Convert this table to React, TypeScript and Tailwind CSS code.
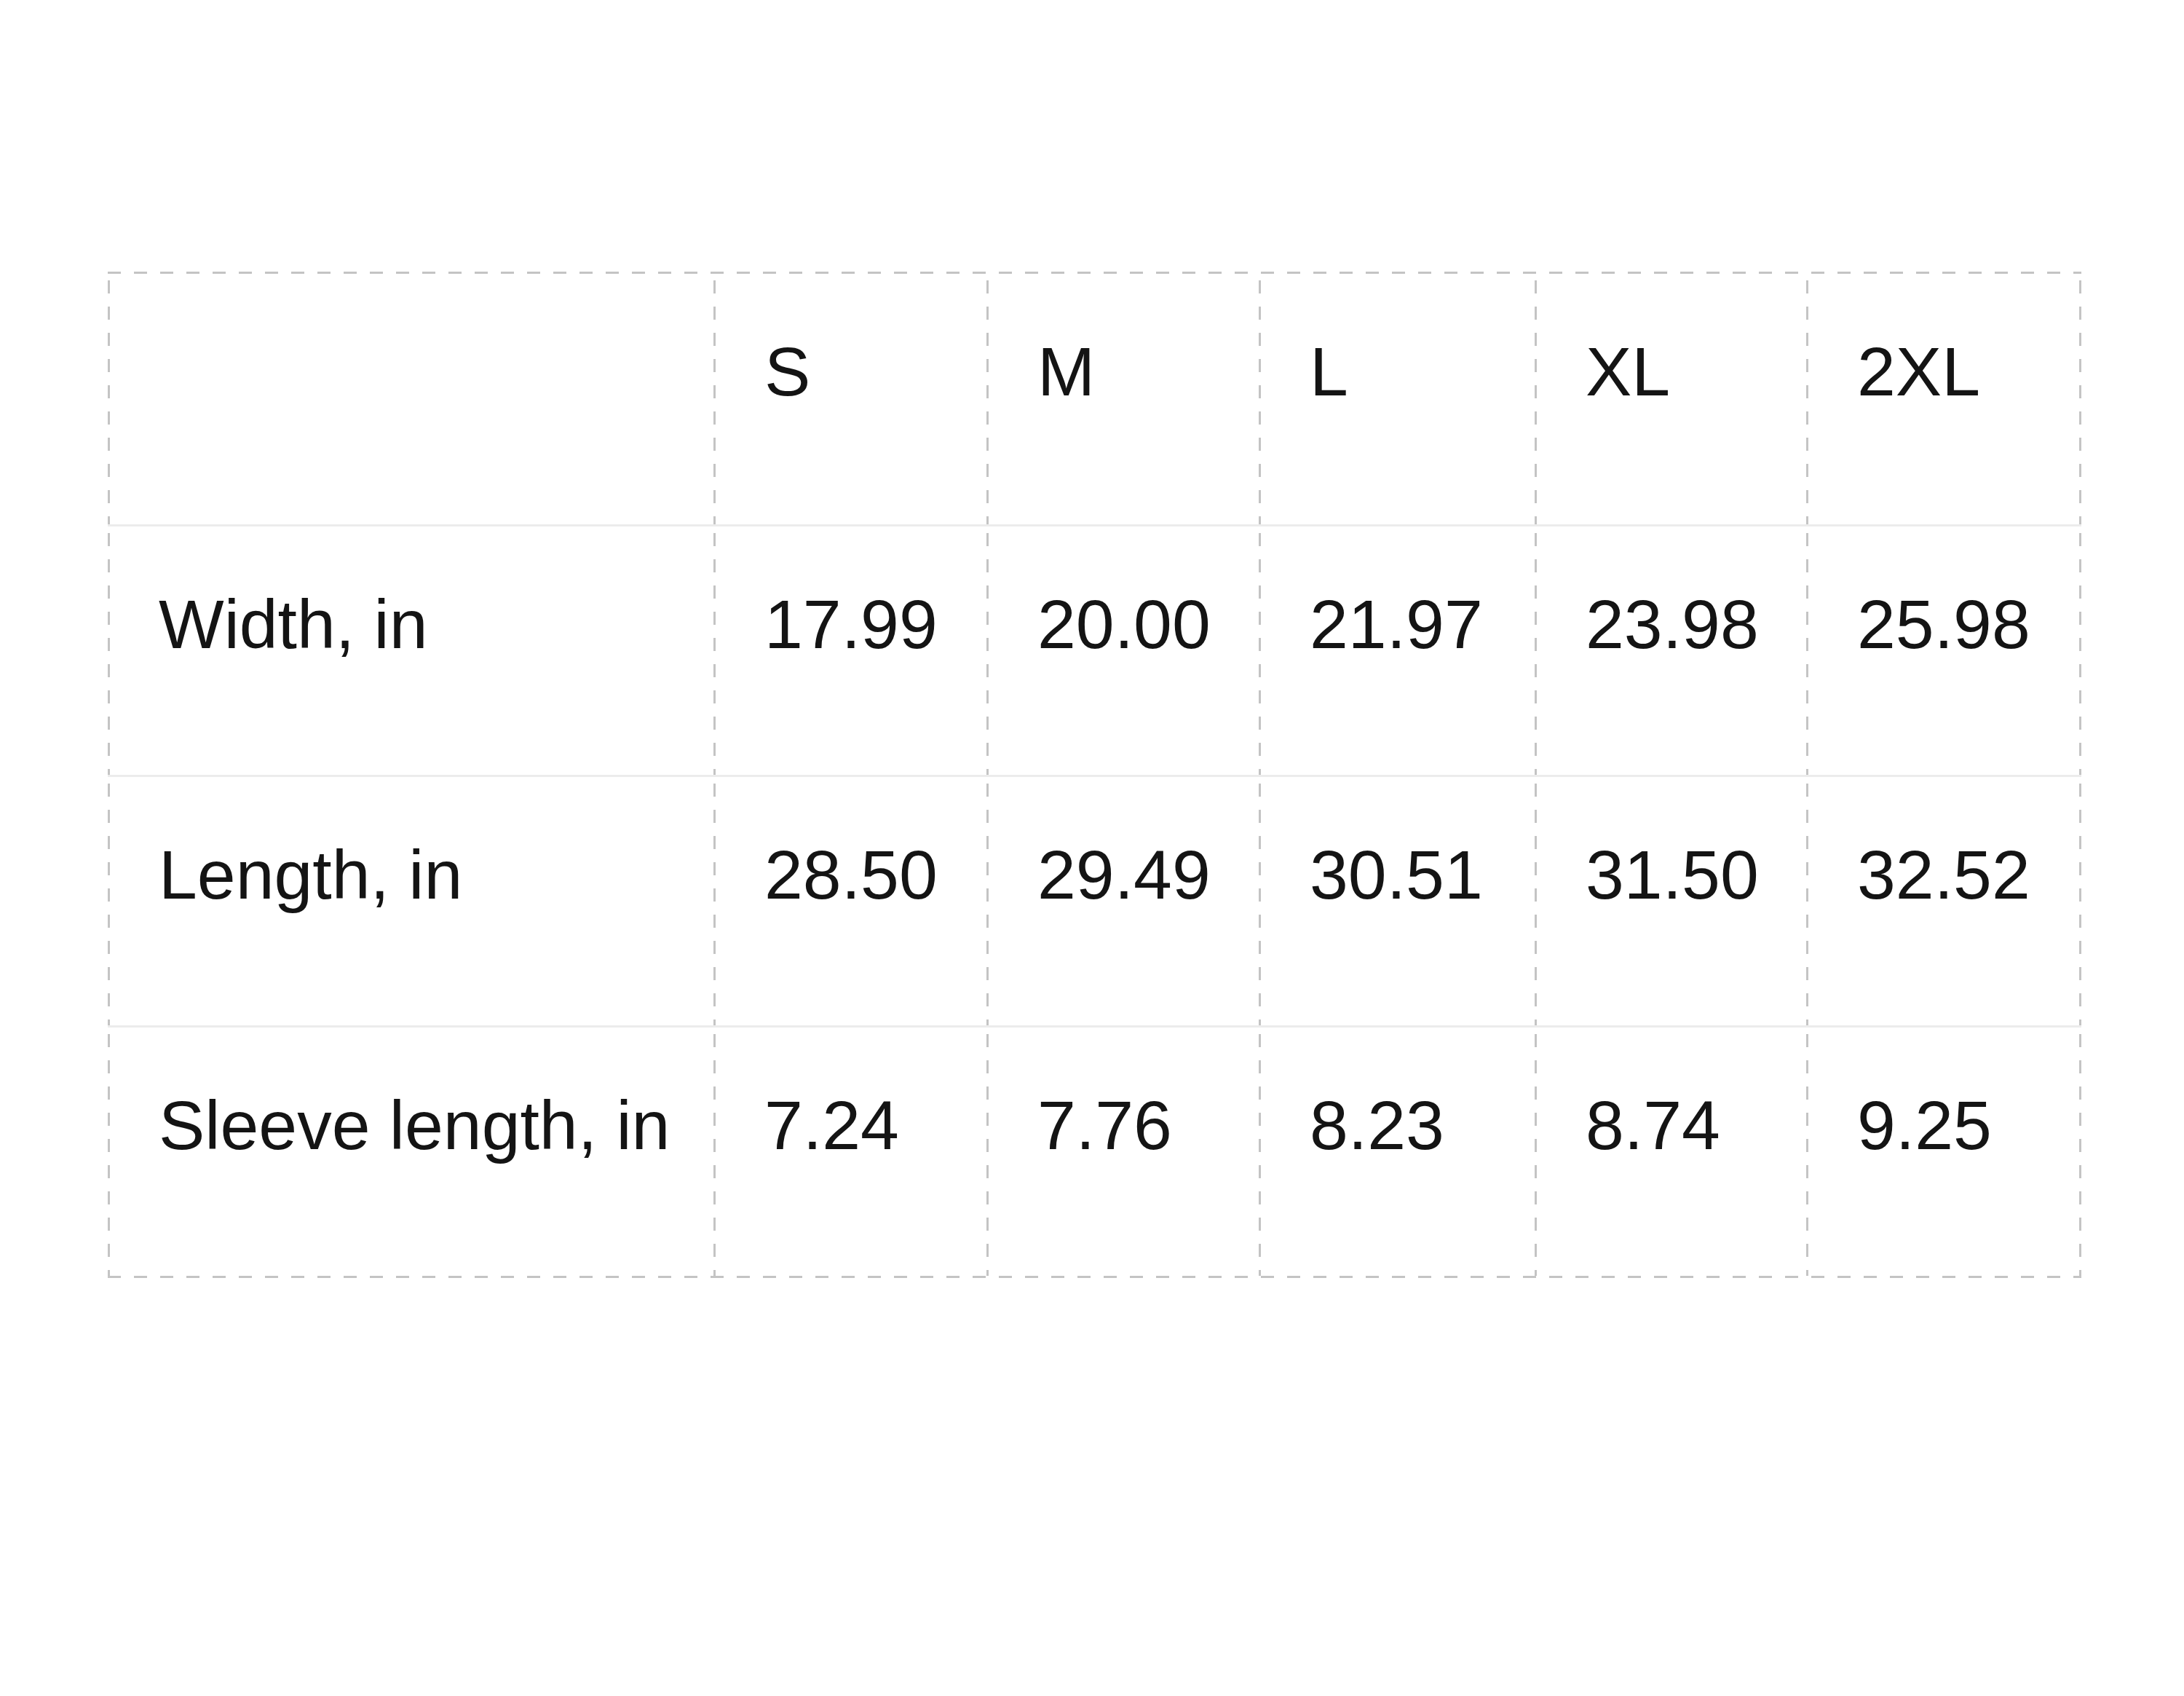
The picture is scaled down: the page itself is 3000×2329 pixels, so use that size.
import React from "react";

const cols = ["w-[832px]", "w-[375px]", "w-[374px]", "w-[379px]", "w-[373px]", "w-[378px]"];

const rows: string[][] = [
  ["", "S", "M", "L", "XL", "2XL"],
  ["Width, in", "17.99", "20.00", "21.97", "23.98", "25.98"],
  ["Length, in", "28.50", "29.49", "30.51", "31.50", "32.52"],
  ["Sleeve length, in", "7.24", "7.76", "8.23", "8.74", "9.25"],
];

const vDash =
  "bg-[repeating-linear-gradient(to_bottom,transparent_0_9px,#c4c4c4_9px_27px,transparent_27px_36px)] bg-[length:3px_100%] bg-no-repeat bg-left";

function HDash() {
  return (
    <div className="h-[3px] w-full bg-[repeating-linear-gradient(to_right,#c4c4c4_0_18px,transparent_18px_36px)]" />
  );
}

export default function App() {
  return (
    <div
      className="min-h-[2329px] w-[3000px] bg-white pt-[373px] pl-[148px]"
      style={{ fontFamily: '"Liberation Sans", Arial, sans-serif' }}
    >
      <div className="flex w-[2711px] flex-col">
        <HDash />
        {rows.map((r, ri) => (
          <div
            key={ri}
            className={
              "flex h-[344px] " +
              (ri > 0 ? "border-t-[3px] border-[#ececec]" : "")
            }
          >
            {r.map((c, ci) => (
              <div
                key={ci}
                className={
                  cols[ci] +
                  " h-full pl-[70px] pt-[80px] text-[95px] leading-[109px] text-[#141414] whitespace-nowrap " +
                  vDash +
                  (ci === r.length - 1 ? " relative" : "")
                }
              >
                {c}
                {ci === r.length - 1 && (
                  <div
                    className={
                      "absolute right-0 top-0 h-full w-[3px] " +
                      "bg-[repeating-linear-gradient(to_bottom,transparent_0_9px,#c4c4c4_9px_27px,transparent_27px_36px)]"
                    }
                  />
                )}
              </div>
            ))}
          </div>
        ))}
        <HDash />
      </div>
    </div>
  );
}
